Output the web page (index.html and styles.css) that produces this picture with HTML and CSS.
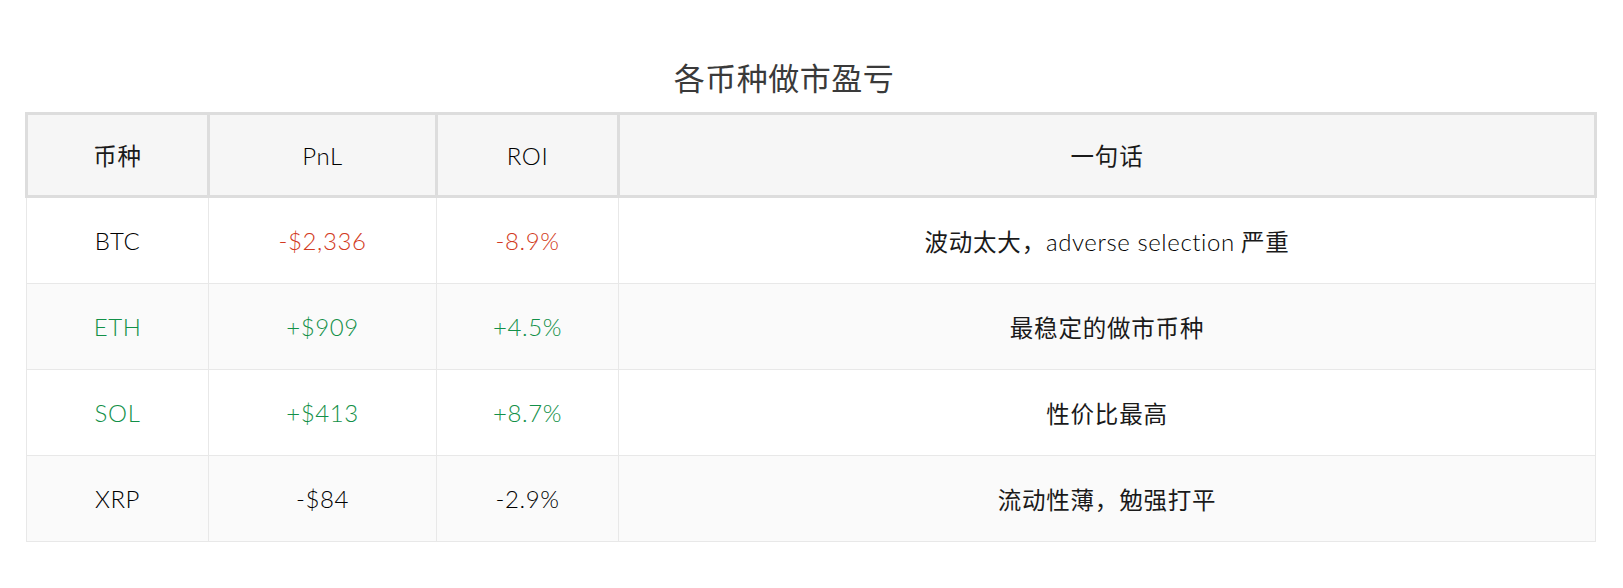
FILE: index.html
```html
<!DOCTYPE html>
<html lang="zh">
<head>
<meta charset="utf-8">
<title>各币种做市盈亏</title>
<link rel="stylesheet" href="styles.css">
</head>
<body>
<div class="page">
  <h2 class="title">各币种做市盈亏</h2>
  <table class="pnl">
    <colgroup>
      <col class="c1"><col class="c2"><col class="c3"><col class="c4">
    </colgroup>
    <thead>
      <tr><th class="cjk">币种</th><th>PnL</th><th>ROI</th><th class="cjk">一句话</th></tr>
    </thead>
    <tbody>
      <tr><td>BTC</td><td class="neg">-$2,336</td><td class="neg">-8.9%</td><td class="cjk">波动太大，<span class="lat">adverse selection</span> 严重</td></tr>
      <tr class="alt"><td class="pos">ETH</td><td class="pos">+$909</td><td class="pos">+4.5%</td><td class="cjk">最稳定的做市币种</td></tr>
      <tr><td class="pos">SOL</td><td class="pos">+$413</td><td class="pos">+8.7%</td><td class="cjk">性价比最高</td></tr>
      <tr class="alt"><td>XRP</td><td>-$84</td><td>-2.9%</td><td class="cjk">流动性薄，勉强打平</td></tr>
    </tbody>
  </table>
</div>
</body>
</html>
```

FILE: styles.css
```css
html, body {
  margin: 0;
  padding: 0;
  background: #ffffff;
}

.page {
  padding: 55px 26px 0 25px;
  font-family: "Lato", "Noto Sans CJK SC", sans-serif;
  color: #333333;
}

.title {
  margin: 0 54px 14px 0;
  text-align: center;
  font-family: "Noto Sans CJK SC", sans-serif;
  font-weight: 400;
  font-size: 31px;
  line-height: 43px;
  letter-spacing: 0.5px;
  color: #3a3a3a;
}

.pnl {
  width: 1572px;
  border-collapse: collapse;
  table-layout: fixed;
  font-size: 24px;
  font-weight: 300;
  letter-spacing: 0.6px;
}

.c1 { width: 182px; }
.c2 { width: 228px; }
.c3 { width: 182px; }
.c4 { width: auto; }

.pnl th {
  height: 80px;
  padding: 0;
  background: #f6f6f6;
  border: 3px solid #dddddd;
  font-weight: 300;
  text-align: center;
  vertical-align: middle;
  color: #000000;
}

.pnl td {
  height: 85px;
  padding: 0;
  border: 1px solid #e8e8e8;
  text-align: center;
  vertical-align: middle;
  color: #000000;
}

.pnl tbody tr.alt td {
  background: #fafafa;
}

.pnl .cjk {
  font-family: "Noto Sans CJK SC", sans-serif;
  font-weight: 400;
  font-size: 23.5px;
  letter-spacing: 0.8px;
  color: #1a1a1a;
}

.pnl .lat {
  font-family: "Lato", sans-serif;
  font-weight: 300;
  font-size: 24px;
  letter-spacing: 0.6px;
  color: #000000;
}

.pnl td.neg {
  color: #d23a22;
}

.pnl td.pos {
  color: #129048;
}
```
